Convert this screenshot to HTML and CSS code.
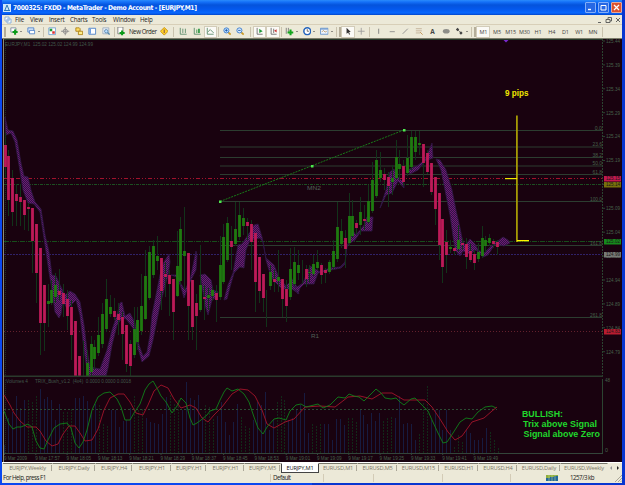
FILE: index.html
```html
<!DOCTYPE html>
<html lang="en">
<head>
	<meta charset="utf-8">
	<title>7000325: FXDD - MetaTrader - Demo Account - [EURJPY,M1]</title>
	<link rel="stylesheet" href="styles.css">
</head>
<body>
<svg width="0" height="0" class="defs">
	<symbol id="i-new" viewBox="0 0 10 10"><path d="M1 1h6v5H1z" fill="#fff" stroke="#789"/><path d="M6 3v6M3 6h6" stroke="#0a9a18" stroke-width="2.4"/></symbol>
	<symbol id="i-prof" viewBox="0 0 10 10"><path d="M1 1h7v5H1z" fill="#d5e6fa" stroke="#4a80c8"/><path d="M3 4h6v4H3z" fill="#fff" stroke="#4a80c8"/></symbol>
	<symbol id="i-mw" viewBox="0 0 10 10"><path d="M1 1h8v8H1z" fill="#fff" stroke="#69c"/><path d="M2 2h3v3H2z" fill="#1a9a30"/><path d="M5 5h3v3H5z" fill="#d33"/></symbol>
	<symbol id="i-cross" viewBox="0 0 10 10"><circle cx="5" cy="5" r="2.5" fill="none" stroke="#888"/><path d="M5 0v10M0 5h10" stroke="#888"/></symbol>
	<symbol id="i-nav" viewBox="0 0 10 10"><path d="M1 1h4l1 1v3H1z" fill="#fd6" stroke="#a87c10"/><path d="M4 5h5v4H4z" fill="#fe8" stroke="#a87c10"/></symbol>
	<symbol id="i-term" viewBox="0 0 10 10"><path d="M1 1.5h8v7H1z" fill="#fff" stroke="#3d77c4"/><path d="M2.5 2v6" stroke="#6a9de0" stroke-width="2"/></symbol>
	<symbol id="i-test" viewBox="0 0 10 10"><path d="M1 1h7v7H1z" fill="#e8eef8" stroke="#9ab"/><circle cx="5" cy="5" r="2" fill="#bdf" stroke="#58a"/><path d="M6.5 6.5L9 9" stroke="#58a" stroke-width="1.5"/></symbol>
	<symbol id="i-order" viewBox="0 0 10 10"><path d="M1 0h6v8H1z" fill="#fff" stroke="#777"/><path d="M6 4v6M3 7h6" stroke="#0a9a18" stroke-width="2.4"/></symbol>
	<symbol id="i-ea" viewBox="0 0 10 10"><path d="M5 .5L9.5 5 5 9.5.5 5z" fill="#ffd22a" stroke="#c58a00"/><path d="M5 3v4" stroke="#964" stroke-width="1.4"/></symbol>
	<symbol id="i-bar" viewBox="0 0 10 10"><path d="M1.500 1v7.500H9M4.500 2v5M7.500 2v5" fill="none" stroke="#586"/></symbol>
	<symbol id="i-cndl" viewBox="0 0 10 10"><path d="M1.500 1v7.500H9" fill="none" stroke="#586"/><path d="M4 3h1v4H4zM6 2h2v5H6z" fill="#2b9440"/></symbol>
	<symbol id="i-line" viewBox="0 0 10 10"><path d="M1.500 1v7.500H9M2 6l3-3 4 4" fill="none" stroke="#586"/></symbol>
	<symbol id="i-zin" viewBox="0 0 10 10"><path d="M6 6l3 3" stroke="#c99a28" stroke-width="2"/><circle cx="4" cy="4" r="3" fill="#bfe0ff" stroke="#3374c8"/><path d="M2.500 4h3M4 2.500v3" stroke="#15a"/></symbol>
	<symbol id="i-zout" viewBox="0 0 10 10"><path d="M6 6l3 3" stroke="#c99a28" stroke-width="2"/><circle cx="4" cy="4" r="3" fill="#d5eaff" stroke="#3374c8"/><path d="M2.500 4h3" stroke="#15a"/></symbol>
	<symbol id="i-auto" viewBox="0 0 10 10"><path d="M2.500 1v7.500H9" fill="none" stroke="#666"/><path d="M5 2l4 3-4 2z" fill="#20993a"/></symbol>
	<symbol id="i-shift" viewBox="0 0 10 10"><path d="M2.500 1v7.500H9M5.500 2v5" fill="none" stroke="#666"/><path d="M9 2.500L6 4.500l3 2z" fill="#c33"/></symbol>
	<symbol id="i-ind" viewBox="0 0 10 10"><path d="M1.500 1v7M4 1v5" stroke="#777"/><path d="M6.500 3v7M3 6.500h7" stroke="#12a51c" stroke-width="2.400"/></symbol>
	<symbol id="i-clock" viewBox="0 0 10 10"><circle cx="5" cy="5" r="4" fill="#fff" stroke="#2464bc" stroke-width="1.800"/><path d="M5 2.500V5h2" fill="none" stroke="#333" stroke-width=".8"/></symbol>
	<symbol id="i-tpl" viewBox="0 0 10 10"><path d="M.5 1.500h9v7h-9z" fill="#eef5ff" stroke="#5c8cc8"/><path d="M1 2.500h8" stroke="#5c8cc8"/><path d="M2 6l2-2 2 2 2-1" fill="none" stroke="#b96"/></symbol>
	<symbol id="i-arrow" viewBox="0 0 10 10"><path d="M3 1v7l2-1.500L6 9l1-.6-1-2.400h2z" fill="#333"/></symbol>
	<symbol id="i-plus" viewBox="0 0 10 10"><path d="M5 1v8M1 5h8" stroke="#999"/></symbol>
	<symbol id="i-vl" viewBox="0 0 10 10"><path d="M5.500 2v6" stroke="#777"/></symbol>
	<symbol id="i-hl" viewBox="0 0 10 10"><path d="M2 5.500h6" stroke="#888"/></symbol>
	<symbol id="i-tl" viewBox="0 0 10 10"><path d="M2 8l6-6" stroke="#888"/></symbol>
	<symbol id="i-fib" viewBox="0 0 10 10"><path d="M1 2h7M1 4.500h7M1 7h5" stroke="#b7a184" stroke-width=".8"/><path d="M6 6l3 3" stroke="#b84"/></symbol>
	<symbol id="i-ell" viewBox="0 0 10 10"><ellipse cx="5" cy="5" rx="4" ry="2.700" fill="#8d8d88"/></symbol>
	<symbol id="i-shp" viewBox="0 0 10 10"><path d="M1 3l2-2 2 2-2 2zM5 7l2-2 2 2-2 2z" fill="#444"/><path d="M3 3l4 4" stroke="#444" stroke-width=".7"/></symbol>
</svg>

<div class="window">
	<div class="title">
		<svg class="logo" viewBox="0 0 8 8"><path d="M0 0h8v8H0z" fill="#cfe6fa"/><path d="M1 6.500h6M2 6l2-5 2 5" fill="none" stroke="#2c78b8"/></svg>
		<span class="caption">7000325: FXDD - MetaTrader - Demo Account - [EURJPY,M1]</span>
		<i class="wb"><svg viewBox="0 0 9 9"><path d="M2 6.500h3" stroke="#fff" stroke-width="1.400"/></svg></i>
		<i class="wb"><svg viewBox="0 0 9 9"><path d="M2 2.500h5v4.500H2z" fill="none" stroke="#fff"/></svg></i>
		<i class="wb close"><svg viewBox="0 0 9 9"><path d="M2 2l5 5M7 2L2 7" stroke="#fff" stroke-width="1.300"/></svg></i>
	</div>
	<div class="menu">
		<svg class="doc" viewBox="0 0 8 8"><path d="M1 1h4v4H1zM3 3h4v4H3z" fill="#fff" stroke="#8ab0dc"/></svg>
		<span class="m1">File</span><span class="m2">View</span><span class="m3">Insert</span><span class="m4">Charts</span><span class="m5">Tools</span><span class="m6">Window</span><span>Help</span>
		<svg class="mdi" viewBox="0 0 26 8"><path d="M2 6.500h3M10 3.500h4v3h-4zM12 3V1.500h3.500V5H14M20 2l4 4M24 2l-4 4" fill="none" stroke="#555" stroke-width=".9"/></svg>
	</div>
	<div class="toolbar" id="toolbar"></div>
	<div class="chart">
		<svg id="chart" viewBox="3 39 619 423" width="619" height="423">
			<defs>
				<pattern id="weave" width="2" height="2" patternUnits="userSpaceOnUse">
					<path d="M0 0h2v2H0z" fill="#2e1645"/><path d="M0 0h1v1H0zM1 1h1v1H1z" fill="#701874"/>
				</pattern>
			</defs>
		</svg>
	</div>
	<div class="tabs">
		<span class="w50">EURJPY,Weekly</span><span class="w43">EURJPY,Daily</span><span class="w37">EURJPY,H4</span><span class="w39">EURJPY,H1</span><span class="w35">EURJPY,H1</span><span class="w38">EURJPY,H1</span><span class="w36">EURJPY,M5</span><span class="w38 on">EURJPY,M1</span><span class="w39">EURUSD,M1</span><span class="w40">EURUSD,M5</span><span class="w42">EURUSD,M15</span><span class="w39">EURUSD,H1</span><span class="w39">EURUSD,H4</span><span class="w43">EURUSD,Daily</span><span class="w47 last">EURUSD,Weekly</span>
		<svg viewBox="0 0 14 8"><path d="M4 2v4L2 4z" fill="#999"/><path d="M9 2v4l2-2z" fill="#222"/></svg>
	</div>
	<div class="status">
		<span class="help">For Help, press F1</span><span class="s1">Default</span><span class="s2"></span><span class="s3"></span><span class="s4"></span>
		<span class="s5"><svg viewBox="0 0 12 7"><path d="M0 0h12v6H0z" fill="#8fae3e"/><path d="M0 3h4V2h4V1h4v5H0z" fill="#24689a"/><path d="M3 0v6M6 0v6M9 0v6" stroke="#bcd08a" stroke-width=".6"/></svg>1257/3 kb</span>
		<svg class="grip" viewBox="0 0 8 8"><path d="M1 8l7-7M4 8l4-4M6.500 8L8 6.500" stroke="#aaa697"/></svg>
	</div>
</div>
<script src="chart.js"></script>
</body>
</html>
```
FILE: styles.css
```css
body {
	margin: 0;
	font: 6.2px "Open Sans", "Liberation Sans", sans-serif;
	color: #222;
	background: #0a3fe0;
}
.defs { position: absolute; }
.window {
	box-sizing: border-box;
	width: 625px;
	height: 485px;
	padding: 0 3px 2px 2px;
	background: linear-gradient(90deg, #0b48f0 50%, #0836d0 50%);
	display: flex;
	flex-direction: column;
	overflow: hidden;
}
.title {
	height: 15px;
	flex: none;
	display: flex;
	align-items: center;
	gap: 2px;
	background: linear-gradient(#2a8bfc 0, #1470f8 2px, #0453dc 5px, #0458ec 9px, #0868ff 13px, #0345c8 15px);
}
.logo { width: 8px; height: 8px; margin-left: 1px; }
.caption {
	flex: 1;
	color: #fff;
	font: bold 6.7px/16px "DejaVu Sans Condensed", "DejaVu Sans", sans-serif;
	letter-spacing: -.33px;
	white-space: nowrap;
}
.wb {
	width: 9px;
	height: 9px;
	border: 1px solid #83aef8;
	border-radius: 1px;
	background: #2768e4;
}
.wb svg { display: block; width: 9px; height: 9px; }
.close { background: #dd5330; border-color: #e8a898; }
.menu {
	height: 9px;
	flex: none;
	display: flex;
	align-items: center;
	background: #ece9d8;
	line-height: 9px;
	letter-spacing: -.2px;
}
.doc { width: 8px; height: 8px; margin: 0 3px 0 2px; }
.m1 { width: 15px; }
.m2 { width: 19px; }
.m3 { width: 21px; }
.m4 { width: 22px; }
.m5 { width: 21px; }
.m6 { width: 27px; }
.mdi { width: 26px; height: 8px; margin-left: auto; }
.toolbar {
	height: 15px;
	flex: none;
	box-sizing: border-box;
	display: flex;
	align-items: center;
	padding-left: 1px;
	background: #ece9d8;
	border-top: 1px solid #d8cfb8;
	border-bottom: 1px solid #7d7d6c;
}
.btn {
	box-sizing: border-box;
	width: 13.6px;
	height: 12px;
	flex: none;
	display: flex;
	align-items: center;
	justify-content: center;
	color: #444;
}
.btn svg { width: 8.5px; height: 8.5px; flex: none; }
.dd { width: 17.5px; }
.dd::after {
	content: "";
	margin-left: 2px;
	border: 1.5px solid transparent;
	border-top-color: #333;
	border-bottom: 0;
}
.order { width: 40px; gap: 3px; white-space: nowrap; color: #222; letter-spacing: -.45px; }
.on-btn { background: #fbfaf6; border: 1px solid #d2ccb9; }
.tf { width: 13.7px; font-size: 5.5px; letter-spacing: -.15px; }
.letter { font-size: 6.5px; font-weight: bold; }
.sep { flex: none; height: 10px; background: linear-gradient(#c9c2ad, #c9c2ad) center / 1px 100% no-repeat; }
.grab { background: linear-gradient(#b4ad99, #b4ad99) center / 2px 100% no-repeat; }
.chart {
	height: 423px;
	flex: none;
	padding-left: 1px;
	background: #19020f;
}
.chart svg { display: block; }
.lbl { font: 4.8px "Liberation Sans", sans-serif; fill: #46614b; }
.note { font: bold 8.6px "Liberation Sans", sans-serif; }
.tabs {
	height: 11px;
	flex: none;
	display: flex;
	box-sizing: border-box;
	padding-left: 1px;
	background: #ece9d8;
	border-top: 1px solid #fff;
	color: #7c7869;
	font-size: 5.7px;
	letter-spacing: -.2px;
	line-height: 9px;
}
.tabs span {
	box-sizing: border-box;
	flex: none;
	text-align: center;
	border-top: 1px solid #77766a;
	border-right: 1px solid transparent;
	background: linear-gradient(#aaa697, #aaa697) right 1px / 1px 6px no-repeat;
	white-space: nowrap;
}
.tabs .on {
	color: #111;
	background: #fff;
	border: 1px solid #444;
	border-top-color: #fff;
	line-height: 8px;
}
.tabs .last { background: none; }
.tabs svg { width: 14px; height: 8px; margin-top: 1px; }
.w35 { width: 35px; }
.w36 { width: 36px; }
.w37 { width: 37px; }
.w38 { width: 38px; }
.w39 { width: 39px; }
.w40 { width: 40px; }
.w42 { width: 42px; }
.w43 { width: 43px; }
.w47 { width: 47px; }
.w50 { width: 50px; }
.status {
	flex: 1;
	display: flex;
	align-items: center;
	background: #ece9d8;
	line-height: 9px;
	letter-spacing: -.5px;
}
.status span { box-sizing: border-box; height: 8px; line-height: 8px; border-right: 1px solid #d3cbb6; }
.help { width: 269px; padding-left: 1px; }
.s1 { width: 53px; padding-left: 2px; }
.s2 { width: 50px; }
.s3 { width: 69px; }
.s4 { width: 68px; }
.status .s5 { flex: 1; display: flex; align-items: center; gap: 12px; padding-left: 35px; border: 0; }
.s5 svg { width: 12px; height: 7px; }
.grip { width: 8px; height: 8px; }
```
FILE: chart.js
```js
// toolbar: [type, icon or text], numbers are separator widths, negative = grab handle
var tools = [
	-4, ['dd', 'new'], ['dd', 'prof'], 3, ['', 'mw'], ['', 'cross'], ['', 'nav'], ['', 'term'], ['', 'test'], 4,
	['order', 'order', 'New Order'], ['', 'ea'], 6, ['', 'bar'], ['', 'cndl'], ['on-btn', 'line'], 3,
	['', 'zin'], ['', 'zout'], 5, ['on-btn', 'auto'], ['on-btn', 'shift'], 3,
	['dd', 'ind'], ['dd', 'clock'], ['dd', 'tpl'], 3, -3, ['on-btn', 'arrow'], ['', 'plus'], 3,
	['', 'vl'], ['', 'hl'], ['', 'tl'], ['', 'fib'], ['letter', '', 'A'], ['', 'ell'], ['dd', 'shp'], 3, -3,
	['tf on-btn', '', 'M1'], ['tf', '', 'M5'], ['tf', '', 'M15'], ['tf', '', 'M30'], ['tf', '', 'H1'],
	['tf', '', 'H4'], ['tf', '', 'D1'], ['tf', '', 'W1'], ['tf', '', 'MN'], 5
];
document.getElementById('toolbar').innerHTML = tools.map(function (t) {
	if (typeof t == 'number') {
		return '<i class="sep' + (t < 0 ? ' grab' : '') + '" style="width:' + Math.abs(t) + 'px"></i>';
	}
	return '<span class="btn ' + t[0] + '">' + (t[1] ? '<svg><use href="#i-' + t[1] + '"/></svg>' : '') + (t[2] || '') + '</span>';
}).join('');

var out = '';
function line(x1, y1, x2, y2, c, dash, w) {
	out += '<line x1="' + x1 + '" y1="' + y1 + '" x2="' + x2 + '" y2="' + y2 + '" stroke="' + c + '"' +
		(dash ? ' stroke-dasharray="' + dash + '"' : '') + (w ? ' stroke-width="' + w + '"' : '') + '/>';
}
function rect(x, y, w, h, c) {
	out += '<rect x="' + x + '" y="' + y + '" width="' + w + '" height="' + h + '" fill="' + c + '"/>';
}
function text(x, y, s, len, c, cls) {
	out += '<text class="' + (cls || 'lbl') + '" x="' + x + '" y="' + y + '"' + (len ? ' textLength="' + len + '" lengthAdjust="spacingAndGlyphs"' : '') +
		(c ? ' style="fill:' + c + '"' : '') + '>' + s + '</text>';
}

// frame
rect(3, 39, 1, 423, '#8b8b78');
line(5.5, 40, 5.5, 453, '#1d3322', '1 1');
line(4, 39.5, 603, 39.5, '#263a2b');
line(602.5, 39, 602.5, 376, '#2b4431', '2 1');
line(602.5, 379, 602.5, 453, '#2b4431');

// price levels
line(4, 178.5, 602, 178.5, '#a0122c', '4 2 1 2 1 2');
line(4, 184.5, 602, 184.5, '#1c4f22', '3 1 1 1');
line(4, 241.5, 602, 241.5, '#174d1b', '5 1 1 1');
line(4, 254.5, 602, 254.5, '#302168', '2 1');
line(4, 331.5, 602, 331.5, '#62202c', '1 2');
[[130.5, '0.0'], [147, '23.6'], [157.5, '38.2'], [166, '50.0'], [174.5, '61.8'], [201.5, '100.0'], [245.5, '161.8'], [317.5, '261.8']].forEach(function (f) {
	line(220, f[0], 602, f[0], '#2c3d30');
	var w = f[1].length * 2.4;
	text(602 - w, f[0] - 1, f[1], w);
});

// moving average bands
[
	'5,117 8,130 13,131 17,140 21,163 24,176 28,177 31,190 35,202 41,209 45,235 49,252 52,275 56,276 60,285 65,295 70,291 75,294 80,302 84,325 87,350 90,367 100,369 107,350 112,330 117,315 120,303 122,302 125,316 130,313 135,323 139,345 143,356 147,352 150,335 152,315 156,295 160,275 164,262 169,254 170,262 168,275 164,290 160,305 156,325 153,340 149,356 142,362 138,348 133,328 126,319 122,318 117,325 112,345 108,368 106,376 88,376 84,350 80,315 76,300 71,305 67,309 63,300 61,314 59,318 55,312 52,290 49,272 44,238 40,212 34,204 28,203 23,190 19,165 15,142 11,133 6,135',
	'171,275 178,275 181,284 185,290 190,280 196,251 197,256 196,270 189,284 187,290 184,298 181,287 177,277',
	'200,275 205,274 211,280 213,290 218,292 217,297 212,300 208,315 205,305 202,285',
	'224,300 228,285 233,273 238,245 242,244 250,232 254,225 258,224 262,237 266,258 274,265 279,278 286,286 292,280 296,287 299,294 292,289 285,289 280,287 273,280 269,270 266,260 263,242 260,238 250,240 246,250 244,268 240,267 234,273 230,287 227,299',
	'290,275 292,279 297,287 303,283 310,266 315,269 320,272 330,268 340,267 345,262 347,247 353,231 356,235 365,224 367,217 373,217 372,231 361,231 355,240 347,245 345,264 341,268 331,270 318,273 314,284 304,284 300,288 298,294 295,287 291,284',
	'380,208 386,190 390,172 394,169 397,176 404,183 404,188 398,181 392,193 386,195',
	'408,170 414,167 417,166 425,160 432,143 433,158 425,161 418,170 410,174',
	'436,159 440,160 446,170 452,190 456,210 460,228 462,238 465,246 470,239 475,244 478,250 484,253 490,247 498,241 503,237 508,240 510,243 504,246 495,244 488,255 483,257 476,250 470,254 463,251 460,256 455,250 450,215 446,195 441,170'
].forEach(function (p) {
	out += '<polygon points="' + p + '" fill="url(#weave)" stroke="#2e1845" stroke-width=".8"/>';
});

// candles: wick top, body top, body bottom, wick bottom; first char is the colour
var candles = ('r133,145,167,178 r150,156,200,216 r170,178,212,226 r184,194,201,226 r184,197,202,226 r200,200,215,230 r203,207,209,231 r208,208,241,273 r224,224,273,303 r248,248,323,355 r285,285,323,351 ' +
	'g284,301,304,327 g280,290,303,305 g273,285,297,303 r269,291,295,300 r284,293,304,317 r290,299,316,330 r300,307,335,360 r321,321,376,376 r356,356,376,376 g341,341,341,376 g350,363,376,376 g336,344,372,376 g340,347,359,370 g317,335,353,356 g303,314,344,348 ' +
	'g279,299,329,332 g295,307,314,317 r298,311,317,320 r303,314,320,335 r312,317,334,360 r325,325,364,372 r340,344,366,376 g307,329,355,358 g307,320,342,350 g274,306,331,335 g250,276,319,320 g246,252,298,300 g240,246,275,278 g236,256,261,270 ' +
	'r258,258,291,310 r262,274,277,297 r270,275,284,316 r279,279,312,340 g231,266,296,297 g217,229,281,285 g207,251,256,290 r253,253,306,340 r280,280,327,340 r294,303,316,350 g245,285,310,312 r285,297,299,320 g288,295,298,310 g287,290,296,301 r285,293,300,322 g236,265,297,300 g224,237,282,284 g217,223,260,262 r226,241,247,270 g202,229,244,246 g202,215,237,240 g208,218,226,235 ' +
	'r218,222,226,240 r220,224,242,270 r233,233,282,312 r257,257,291,303 r274,274,298,312 g290,290,290,327 g265,272,286,290 r270,279,282,292 g250,277,281,292 r279,279,299,317 r280,289,306,322 g248,269,297,300 g247,262,284,286 g250,265,273,280 g260,260,260,284 r265,269,279,287 g265,272,273,282 g255,264,274,276 g250,262,268,270 ' +
	'r263,265,275,284 r268,270,273,283 g260,262,272,274 g240,251,267,270 g202,227,259,262 g219,231,244,248 r230,238,249,268 g193,216,243,246 g200,216,236,238 r220,223,228,234 g197,212,225,235 r205,219,221,230 g185,201,222,224 g162,180,211,213 g150,160,196,198 g152,170,178,182 r168,174,180,190 r172,177,186,207 g165,178,182,195 g140,157,178,180 g150,164,169,180 r160,166,182,186 g135,158,173,176 g131,137,167,170 g131,137,152,160 ' +
	'g131,143,145,155 r144,144,163,187 r150,153,172,174 r163,163,192,195 r177,177,209,225 r193,193,245,260 r219,219,267,283 r230,242,255,273 g240,247,249,253 r246,248,251,255 g225,240,249,252 r238,243,245,250 r238,244,257,269 r244,251,260,262 r250,254,263,270 g243,252,259,262 g226,238,256,258 g236,240,246,252 g234,238,243,246 r239,241,244,248 r240,242,247,255').split(' ');
candles.forEach(function (s, i) {
	var v = s.slice(1).split(',').map(Number);
	var x = Math.round(4.5 + i * 3.91);
	line(x + .5, v[0], x + .5, v[3], '#12331a');
	if (v[2] > v[1]) {
		rect(x - .9, v[1], 2.8, v[2] - v[1], s[0] == 'r' ? '#bd1a58' : '#1f7a10');
	}
});

// trend line of the fibo tool
line(220, 201.5, 404, 130, '#177a18', '2 1');
rect(219, 200.5, 2.5, 2.5, '#4ee84e');
rect(311, 165, 2.5, 2.5, '#4ee84e');
rect(403, 129, 2.5, 2.5, '#4ee84e');
text(307, 190, 'MN2', 14, '#526057');
text(311, 337.5, 'R1', 8, '#526057');
out += '<path d="M503.500 40h5l-2.500 2.500z" fill="#7a2ad0"/>';

// header and price scale
text(5, 45.5, 'EURJPY,M1&#160; 125.02 125.02 124.99 124.99', 88, '#40574a');
for (var i = 0; i < 14; i++) {
	var y = 41 + i * 23.9;
	line(603, y, 605, y, '#2b4431');
	text(606, y + 1.8, (125.44 - i * .05).toFixed(2), 14);
}
[[178.5, '125.15', '#c2184e'], [184.5, '125.14', '#77700c'], [241.5, '125.02', '#158a1c'], [254.5, '124.99', '#777a76'], [331.5, '124.83', '#b81c30']].forEach(function (p) {
	rect(604, p[0] - 2.5, 17, 5.5, p[2]);
	text(606, p[0] + 1.9, p[1], 14, '#1c1718');
});

// target marks
rect(516, 115.5, 1.8, 126.5, '#a59a05');
rect(505, 178, 12, 1.2, '#f0e800');
rect(517, 240, 12, 1.3, '#fff600');
text(505, 95.5, '9 pips', 23.5, '#f0e800', 'note');

// indicator window
rect(4, 376, 618, 3, '#19020f');
rect(4, 375.5, 599, 1.5, '#2a3a2c');
line(4, 453.5, 603, 453.5, '#33453a');
var vol = '445,418,412,396,408,400,400,402,396,389,399,397,400,420,404,412,412,409,398,398,396,401,412,404,405,424,426,410,410,427,421,420,408,396,410,409,418,422,423,424,414,397,395,404,400,410,382,398,400,395,417,405,407,419,416,402,422,435,422,404,417,426,428,420,402,405,392,430,420,402,396,400,420,418,410,405,393,433,424,426,424,424,424,440,419,419,425,418,418,422,409,415,424,413,421,413,421,418,417,418,396,424,423,424,440,434,403,386,420,410,410,430,410,430,447,435,442,430,433,440,440,438,428,432,440,448'.split(',');
vol.forEach(function (v, i) {
	var x = Math.round(4 + i * 3.95) + .5, green = i % 9 > 5;
	line(x, v, x, 453, green ? '#122a19' : '#171b40', green ? '2 1' : '');
});
line(4, 409.5, 497, 409.5, '#2c4a33', '2 2');
out += '<g fill="none" stroke-width=".9"><polyline stroke="#a3142a" points="4,395 10,405 14,413 20,421 27,427 36,427 40,431 46,441 52,446 58,444 63,434 69,426 75,426 80,433 85,441 92,440 98,429 104,410 110,398 118,394 124,394 130,402 136,413 143,415 148,405 154,391 161,385 168,388 174,399 181,408 190,405 196,408 202,418 208,422 214,415 222,407 232,394 240,389 248,390 255,396 262,410 267,424 274,428 285,422 294,419 305,407 320,406 335,407 348,397 360,396 372,399 382,393 392,393 404,400 415,400 425,400 432,407 440,419 448,432 455,440 462,436 472,422 484,418 492,411 497,407"/>' +
	'<polyline stroke="#10801a" points="4,411 9,424 13,429 17,427 21,427 28,424 32,427 36,441 40,448 44,449 48,440 54,428 60,424 67,423 71,428 75,443 79,448 83,442 87,430 92,410 98,397 104,393 110,392 117,399 121,407 125,420 130,420 134,413 140,404 145,390 149,384 153,381 157,388 161,396 166,402 172,413 177,406 181,398 186,403 190,418 193,425 197,423 201,420 207,415 210,411 216,409 220,400 224,392 227,388 232,391 238,389 244,394 249,402 254,417 258,428 263,434 267,427 274,419 279,418 286,420 290,411 296,405 301,404 306,407 318,404 323,408 330,405 338,397 345,398 349,394 354,396 359,397 364,401 370,395 376,389 381,393 385,398 391,399 396,398 400,402 404,405 411,399 415,398 420,403 428,411 432,420 438,433 443,443 447,442 453,433 460,422 466,418 472,419 478,412 485,407 492,406 496,408"/></g>';
text(6, 383, 'Volumes 4', 22, '#40574a');
text(35, 383, 'TRIX_Bush_v1.2&#160; (4x4)&#160; 0.0000 0.0000 0.0018', 96, '#40574a');
text(605, 382, '48', 5);
text(605, 452, '0', 3);
['2009', '17:57', '18:05', '18:13', '18:21', '18:29', '18:37', '18:45', '18:53', '19:01', '19:09', '19:17', '19:25', '19:33', '19:41', '19:49'].forEach(function (d, i) {
	var x = 4 + i * 31.3;
	line(x + .5, 453, x + .5, 455, '#33453a');
	text(x, 459.5, '9 Mar ' + d, i ? 24.5 : 23);
});
text(522, 416.5, 'BULLISH:', 41, '#20d82c', 'note');
text(523, 426.5, 'Trix above Signal', 74, '#20d82c', 'note');
text(523.5, 436.5, 'Signal above Zero', 76.5, '#20d82c', 'note');

document.getElementById('chart').innerHTML += out;
```
